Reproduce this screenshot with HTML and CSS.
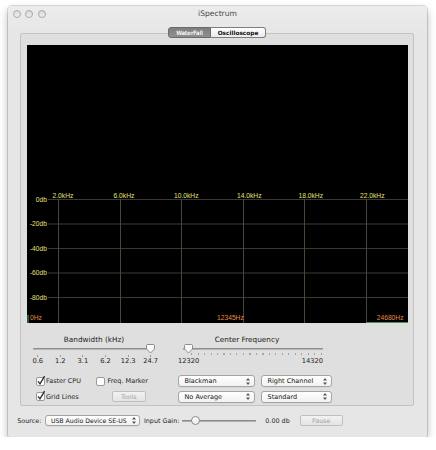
FILE: index.html
```html
<!DOCTYPE html>
<html>
<head>
<meta charset="utf-8">
<title>iSpectrum</title>
<link rel="stylesheet" href="styles.css">
</head>
<body>
<div class="window">
  <div class="titlebar">
    <div class="lights"><span class="light"></span><span class="light"></span><span class="light"></span></div>
    <div class="title">iSpectrum</div>
    <div></div>
  </div>
  <div class="tabs">
    <span class="seg seg-sel">WaterFall</span><span class="seg">Oscilloscope</span>
  </div>
  <div class="tabbox">
    <svg class="plot" width="381" height="278" viewBox="0 0 381 278">
      <rect width="381" height="278" fill="#000"/>
      <g stroke="#3a3a33" stroke-width="1">
        <line x1="21" y1="154.5" x2="381" y2="154.5"/>
        <line x1="21" y1="179" x2="381" y2="179"/>
        <line x1="21" y1="203.5" x2="381" y2="203.5"/>
        <line x1="21" y1="228" x2="381" y2="228"/>
        <line x1="21" y1="252.5" x2="381" y2="252.5"/>
      </g>
      <g stroke="#47473a" stroke-width="1">
        <line x1="31.5" y1="154" x2="31.5" y2="278"/>
        <line x1="93.5" y1="154" x2="93.5" y2="278"/>
        <line x1="154.5" y1="154" x2="154.5" y2="278"/>
        <line x1="216.5" y1="154" x2="216.5" y2="278"/>
        <line x1="277.5" y1="154" x2="277.5" y2="278"/>
        <line x1="339.5" y1="154" x2="339.5" y2="278"/>
      </g>
      <g class="freq">
        <text x="25.5" y="152.5">2.0kHz</text>
        <text x="86.5" y="152.5">6.0kHz</text>
        <text x="147" y="152.5">10.0kHz</text>
        <text x="210" y="152.5">14.0kHz</text>
        <text x="271.5" y="152.5">18.0kHz</text>
        <text x="333" y="152.5">22.0kHz</text>
      </g>
      <g class="db">
        <text x="20" y="156.8">0db</text>
        <text x="20" y="181.3">-20db</text>
        <text x="20" y="205.8">-40db</text>
        <text x="20" y="230.3">-60db</text>
        <text x="20" y="254.8">-80db</text>
      </g>
      <g class="hz">
        <text x="3" y="275.3">0Hz</text>
        <text x="190" y="275.3">12345Hz</text>
        <text x="376.5" y="275.3" text-anchor="end">24680Hz</text>
      </g>
      <line x1="1" y1="270" x2="1" y2="278" stroke="#3f9a4f" stroke-width="1.2"/>
      <line x1="339" y1="277.5" x2="381" y2="277.5" stroke="#3f9a4f" stroke-width="1"/>
    </svg>

    <div class="controls">
      <div class="slider">
        <div class="slider-title">Bandwidth (kHz)</div>
        <div class="track-row">
          <div class="track track-bw"></div>
          <svg class="knob" style="left:118.5px" width="9" height="10" viewBox="0 0 9 10"><path d="M0.5 1.5Q0.5 0.5 1.5 0.5H7.5Q8.5 0.5 8.5 1.5V5L4.5 9L0.5 5Z" fill="#fafafa" stroke="#8c8c8c"/></svg>
        </div>
        <div class="bw-grid ticks"><i></i><i></i><i></i><i></i><i></i><i></i></div>
        <div class="bw-grid labels"><span>0.6</span><span>1.2</span><span>3.1</span><span>6.2</span><span>12.3</span><span>24.7</span></div>
      </div>

      <div class="slider">
        <div class="slider-title cf-title">Center Frequency</div>
        <div class="track-row">
          <div class="track track-cf"></div>
          <svg class="knob" style="left:6px" width="9" height="10" viewBox="0 0 9 10"><path d="M0.5 1.5Q0.5 0.5 1.5 0.5H7.5Q8.5 0.5 8.5 1.5V5L4.5 9L0.5 5Z" fill="#fafafa" stroke="#8c8c8c"/></svg>
        </div>
        <div class="cf-ticks"></div>
        <div class="cf-labels"><span>12320</span><span>14320</span></div>
      </div>

      <div class="options">
        <label class="check">
          <svg width="10" height="11" viewBox="0 0 10 11"><rect x="0.5" y="2.5" width="8" height="8" rx="1.5" fill="#fff" stroke="#9a9a9a"/><path d="M2 6.3L4 8.8L8.6 1.2" fill="none" stroke="#2a2a2a" stroke-width="1.3"/></svg>
          <span>Faster CPU</span>
        </label>
        <label class="check">
          <svg width="10" height="11" viewBox="0 0 10 11"><rect x="0.5" y="2.5" width="8" height="8" rx="1.5" fill="#fff" stroke="#9a9a9a"/></svg>
          <span class="marker-text">Freq. Marker</span>
        </label>
        <label class="check">
          <svg width="10" height="11" viewBox="0 0 10 11"><rect x="0.5" y="2.5" width="8" height="8" rx="1.5" fill="#fff" stroke="#9a9a9a"/><path d="M2 6.3L4 8.8L8.6 1.2" fill="none" stroke="#2a2a2a" stroke-width="1.3"/></svg>
          <span>Grid Lines</span>
        </label>
        <div class="btn btn-tools">Tools</div>
      </div>

      <div class="popups">
        <div class="popup"><span>Blackman</span><svg width="4" height="7" viewBox="0 0 4 7"><path d="M2 0L4 2.5H0Z M2 7L4 4.5H0Z" fill="#555"/></svg></div>
        <div class="popup"><span>Right Channel</span><svg width="4" height="7" viewBox="0 0 4 7"><path d="M2 0L4 2.5H0Z M2 7L4 4.5H0Z" fill="#555"/></svg></div>
        <div class="popup"><span>No Average</span><svg width="4" height="7" viewBox="0 0 4 7"><path d="M2 0L4 2.5H0Z M2 7L4 4.5H0Z" fill="#555"/></svg></div>
        <div class="popup"><span>Standard</span><svg width="4" height="7" viewBox="0 0 4 7"><path d="M2 0L4 2.5H0Z M2 7L4 4.5H0Z" fill="#555"/></svg></div>
      </div>
    </div>
  </div>

  <div class="bottombar">
    <span class="lbl">Source:</span>
    <div class="popup popup-src"><span>USB Audio Device SE-US</span><svg width="4" height="7" viewBox="0 0 4 7"><path d="M2 0L4 2.5H0Z M2 7L4 4.5H0Z" fill="#555"/></svg></div>
    <span class="lbl lbl-gain">Input Gain:</span>
    <div class="gain">
      <div class="gain-track"></div>
      <span class="gain-knob" style="left:8.5px"></span>
    </div>
    <span class="lbl lbl-db">0.00 db</span>
    <div class="btn btn-pause">Pause</div>
  </div>
</div>
</body>
</html>
```

FILE: styles.css
```css
* { box-sizing: border-box; }

html, body {
  margin: 0;
  padding: 0;
  background: #ffffff;
}

body {
  font-family: "DejaVu Sans", "Liberation Sans", sans-serif;
  font-size: 6.5px;
  color: #1e1e1e;
}

.window {
  margin: 6px 0 0 8px;
  width: 419px;
  height: 431px;
  border-radius: 4px 4px 3px 3px;
  background: linear-gradient(#ececec 0px, #e6e6e6 30px, #e6e6e6 100%);
  box-shadow: 0 0 0 1px rgba(0, 0, 0, 0.13), 0 4px 9px rgba(0, 0, 0, 0.3);
  display: flex;
  flex-direction: column;
}

/* title bar */
.titlebar {
  height: 14px;
  display: grid;
  grid-template-columns: 1fr auto 1fr;
  align-items: center;
  padding-top: 1px;
}

.lights {
  display: flex;
  gap: 4.5px;
  padding-left: 4.7px;
}

.light {
  width: 8px;
  height: 8px;
  border-radius: 50%;
  background: linear-gradient(#d8d8d8, #f0f0f0);
  border: 1px solid #a9a9a9;
}

.title {
  font-size: 7.6px;
  color: #4a4a4a;
}

/* segmented tabs */
.tabs {
  margin-top: 7px;
  display: flex;
  justify-content: center;
  position: relative;
  z-index: 1;
  padding-right: 1px;
}

.seg {
  height: 11px;
  display: flex;
  align-items: center;
  justify-content: center;
  font-size: 5.8px;
  font-weight: bold;
  border: 1px solid #7d7d7d;
  background: linear-gradient(#ffffff, #ebebeb);
  color: #111;
  width: 55px;
  border-radius: 0 3px 3px 0;
  border-left: none;
}

.seg-sel {
  width: 43px;
  border-radius: 3px 0 0 3px;
  border-left: 1px solid #6a6a6a;
  border-color: #6a6a6a;
  background: linear-gradient(#7e7e7e, #8f8f8f);
  color: #f4f4f4;
  font-weight: normal;
  text-shadow: 0 0 0.5px #fff;
}

/* tab box */
.tabbox {
  margin: -5px 0 0 12px;
  width: 394px;
  height: 373px;
  border: 1px solid #c3c3c3;
  border-radius: 2px;
  background: #dfdfdf;
}

.plot {
  display: block;
  margin: 11px 0 0 6px;
}

.plot text {
  font-family: "Liberation Sans", Arial, sans-serif;
  font-size: 6.7px;
}

.freq text, .db text { fill: #e6e07a; }
.db text { text-anchor: end; }
.hz text { fill: #e58b4a; }

/* controls */
.controls {
  display: grid;
  grid-template-columns: 134px 154px;
  column-gap: 17px;
  row-gap: 9px;
  padding: 12px 0 0 6px;
}

.slider-title {
  height: 9px;
  line-height: 9px;
  text-align: center;
  font-size: 7.3px;
  color: #222;
}

.cf-title {
  padding-right: 16px;
}

.track-row {
  position: relative;
  height: 9px;
  display: flex;
  align-items: center;
}

.track {
  height: 2px;
  border-radius: 1px;
  background: #b4b4b4;
  box-shadow: inset 0 1px 0 #8f8f8f;
}

.track-bw {
  width: 120px;
  margin-left: 6px;
}

.track-cf {
  width: 140px;
  margin-left: 5px;
}

.knob {
  position: absolute;
  top: 0;
}

.bw-grid {
  display: grid;
  grid-template-columns: repeat(6, 22.6px);
  margin-left: -0.6px;
}

.ticks {
  height: 4px;
  justify-items: center;
}

.ticks i {
  display: block;
  width: 1px;
  height: 2px;
  margin-top: 2px;
  background: #9a9a9a;
}

.labels, .cf-labels {
  height: 9px;
  line-height: 9px;
  font-size: 6.7px;
  color: #222;
}

.labels span {
  text-align: center;
}

.cf-ticks {
  height: 4px;
  margin: 0 9px 0 13px;
  background: repeating-linear-gradient(90deg, #a5a5a5 0 1px, transparent 1px 6.5px);
  background-size: 100% 2px;
  background-repeat: no-repeat;
  background-position: 0 0;
}

.cf-labels {
  display: flex;
  justify-content: space-between;
  width: 145px;
}

/* checkboxes */
.options {
  display: grid;
  grid-template-columns: 60px auto;
  grid-auto-rows: 12px;
  row-gap: 3.5px;
  padding-left: 9px;
  align-items: center;
}

.check {
  display: flex;
  align-items: center;
  color: #1e1e1e;
}

.check svg {
  display: block;
  margin-top: -2px;
}

.marker-text {
  margin-left: 1.5px;
}

.btn {
  height: 11px;
  border: 1px solid #c0c0c0;
  border-radius: 2px;
  background: linear-gradient(#f2f2f2, #e4e4e4);
  color: #a3a3a3;
  display: flex;
  align-items: center;
  justify-content: center;
  font-size: 6.3px;
}

.btn-tools {
  width: 34px;
  margin-left: 15.7px;
}

/* popups */
.popups {
  display: grid;
  grid-template-columns: 77px 71px;
  grid-auto-rows: 12px;
  column-gap: 6px;
  row-gap: 3.5px;
}

.popup {
  height: 12px;
  border: 1px solid #a5a5a5;
  border-radius: 3px;
  background: linear-gradient(#ffffff, #f1f1f1);
  box-shadow: 0 0.5px 0 rgba(0, 0, 0, 0.08);
  display: flex;
  align-items: center;
  justify-content: space-between;
  padding: 0 4px 0 5.5px;
  color: #151515;
}

.popup svg { display: block; }

/* bottom bar */
.bottombar {
  margin-top: 8px;
  height: 13px;
  display: flex;
  align-items: center;
  padding-left: 9.3px;
}

.lbl {
  font-size: 6.4px;
  color: #1e1e1e;
}

.popup-src {
  width: 94.5px;
  height: 10.5px;
  margin-left: 4px;
  font-size: 6.2px;
  padding: 0 3px 0 4.5px;
}

.lbl-gain {
  margin-left: 4px;
}

.gain {
  position: relative;
  width: 74px;
  height: 9px;
  margin-left: 3px;
  display: flex;
  align-items: center;
}

.gain-track {
  width: 100%;
  height: 2px;
  border-radius: 1px;
  background: #b0b0b0;
  box-shadow: inset 0 1px 0 #8a8a8a;
}

.gain-knob {
  position: absolute;
  top: 0;
  width: 9px;
  height: 9px;
  border-radius: 50%;
  border: 1px solid #8c8c8c;
  background: linear-gradient(#ffffff, #ececec);
}

.lbl-db {
  margin-left: 9px;
}

.btn-pause {
  width: 43px;
  margin-left: 10px;
}
```
